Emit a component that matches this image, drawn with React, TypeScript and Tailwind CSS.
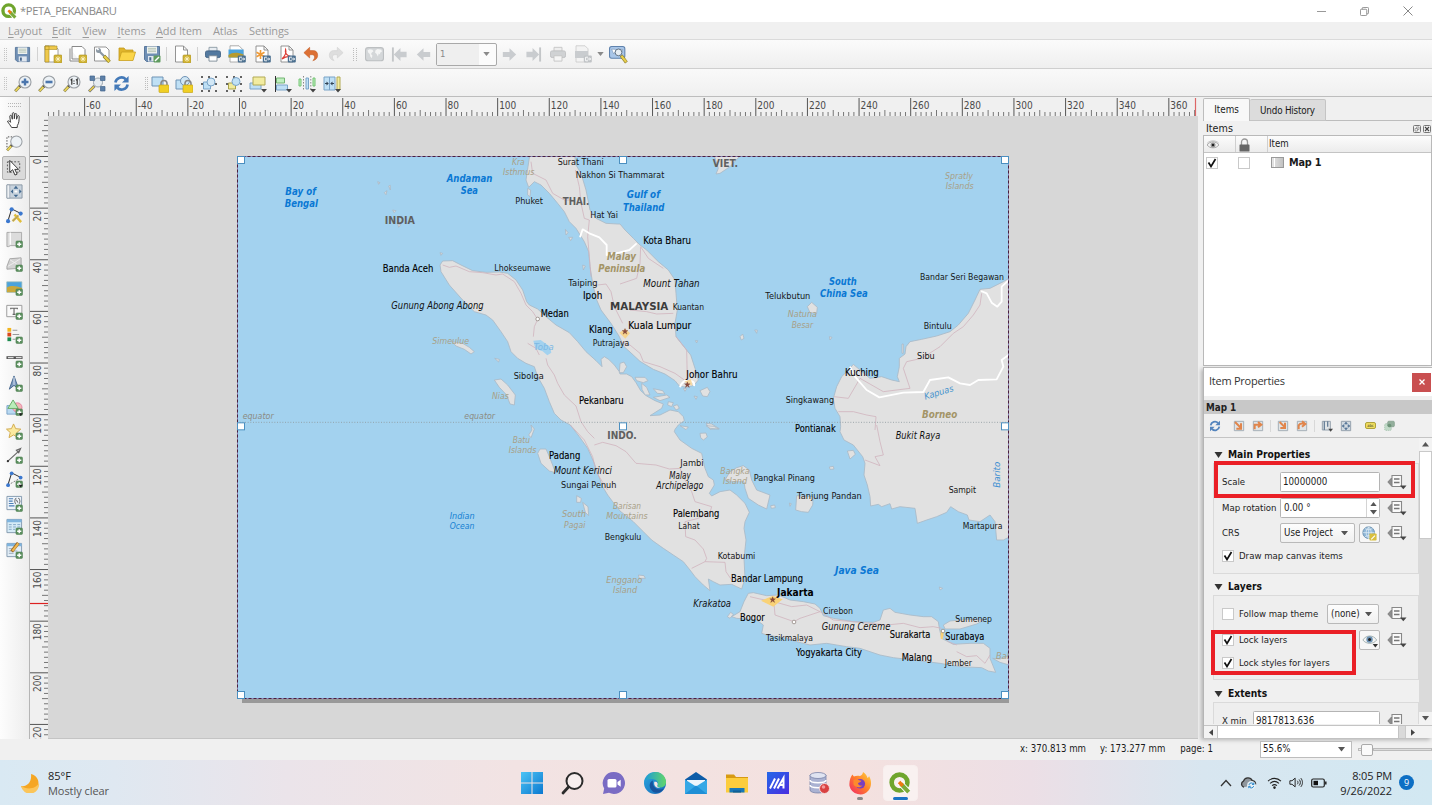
import React from "react";

type Kids = { children?: React.ReactNode };

/* ---------- small drawing helpers ---------- */

function Ic({ children, s = "size-[18px]", box = "0 0 18 18" }: Kids & { s?: string; box?: string }) {
  return (
    <svg viewBox={box} className={`${s} block shrink-0`} fill="none">
      {children}
    </svg>
  );
}

const Plus = () => (
  <g>
    <rect x="10.5" y="10.5" width="7" height="7" rx="1.2" fill="#5b8f5e" stroke="#47774b" strokeWidth=".5" />
    <path d="M14 11.8v4.4M11.8 14h4.4" stroke="#fff" strokeWidth="1.5" />
  </g>
);
const Gold = () => (
  <g>
    <rect x="10" y="10" width="8" height="8" rx="1" fill="#d2b536" stroke="#a98f22" strokeWidth=".6" />
    <path d="M14 11.3v5.4M11.3 14h5.4M12.2 12.2l3.6 3.6M15.8 12.2l-3.6 3.6" stroke="#fff8d0" strokeWidth=".8" />
  </g>
);
const Export = ({ c = "#4b6f8f" }: { c?: string }) => (
  <g>
    <rect x="9.8" y="10.5" width="8" height="7" rx="1" fill={c} />
    <path d="M14 12.2h-2.4v3.6H14M13.3 14h3M15.3 12.6l1.4 1.4-1.4 1.4" stroke="#fff" strokeWidth=".9" />
  </g>
);
const Floppy = () => (
  <g>
    <path d="M1.5 1.5h15v15h-13l-2-2z" fill="#6f8fb4" stroke="#5a789c" />
    <path d="M4 1.500h10v7H4z" fill="#eef2ef" />
    <path d="M5 3.400h8M5 5h8M5 6.600h8" stroke="#a5b7a5" strokeWidth=".7" />
    <path d="M5 11h8.500v5.500H5z" fill="#dfe6ee" />
    <path d="M6.300 12.200h2v3.400h-2z" fill="#49698f" />
  </g>
);
const Lens = ({ children }: Kids) => (
  <g>
    <path d="M6.500 10.500L1.200 16.300" stroke="#8b8350" strokeWidth="3" />
    <path d="M6 11.200L1.600 16" stroke="#ead558" strokeWidth="1.800" />
    <path d="M7.200 9.800l-1.800 2" stroke="#444" strokeWidth="2.600" />
    <circle cx="11" cy="7" r="6" fill="#edf2f6" stroke="#9a9fa4" strokeWidth="1.100" />
    {children}
  </g>
);
const Sheet = () => <path d="M3 1h8l4 4v12H3z M11 1v4h4" fill="#fff" stroke="#888" strokeWidth=".9" />;
const Down = () => <path d="M12 14h6l-3 3.6z" fill="#444" />;
const Lock = () => (
  <g>
    <path d="M10 10V8.500a3 3 0 016 0V10" stroke="#888" strokeWidth="1.600" />
    <rect x="8" y="10" width="10" height="7.500" rx=".8" fill="#f0cf24" stroke="#c4a51c" strokeWidth=".7" />
  </g>
);
const Dots = ({ c = "#333" }: { c?: string }) => (
  <path d="M1 2h2M8 2h2M15 2h2M1 16h2M8 16h2M15 16h2M1 9h2M15 9h2" stroke={c} strokeWidth="1.400" />
);
const Globe = () => (
  <g>
    <rect x=".5" y="2.500" width="17" height="12.500" rx="2.500" fill="#d4d7d9" stroke="#bcbfc1" />
    <path d="M2.500 5l2-1 2.500.5 1 1.500-1.500 1-.8 1.500L7 10l-.5 2.500L5 11l-.5-2.500L3 7zM10 5l2-1.200 3.500.7.500 2-1.500.5-.5 2-1-1-.8 3-1.200-2.500L9.500 7z" fill="#f4f5f5" />
  </g>
);
const Refresh = ({ s }: { s?: string }) => (
  <Ic s={s}>
    <path d="M2.500 8A6.500 6.500 0 0113.500 4.500M15.500 10A6.500 6.500 0 014.500 13.500" stroke="#4379b8" strokeWidth="2.700" />
    <path d="M16.500 1v7h-7zM1.500 17v-7h7z" fill="#4379b8" />
  </Ic>
);

/* ---------- toolbars ---------- */

const Cell = ({ children }: Kids) => <div className="flex w-[24.6px] shrink-0 items-center justify-center">{children}</div>;
const Sep = () => (
  <div className="flex w-[6px] shrink-0 justify-center">
    <div className="h-[14px] w-px bg-[#d2d2d2]" />
  </div>
);
const Grip = () => (
  <div className="mx-[5px] flex shrink-0 gap-[2px]">
    <div className="h-[13px] w-0 border-l border-dotted border-[#bdbdbd]" />
    <div className="h-[13px] w-0 border-l border-dotted border-[#bdbdbd]" />
  </div>
);

function MainBar() {
  return (
    <div className="flex h-[30px] shrink-0 items-center border-b border-[#cfcfcf] border-t border-t-[#dadada] bg-gradient-to-b from-[#fbfbfb] to-[#efefef]">
      <div className="w-[10.400px] shrink-0 pl-[4px]">
        <div className="h-[13px] w-[3px] border-x border-dotted border-[#c4c4c4]" />
      </div>
      <Cell><Ic s="size-[17px]"><Floppy /></Ic></Cell>
      <Sep />
      <Cell>
        <Ic>
          <path d="M1 1h10l3 3v13H1z" fill="#fff" stroke="#888" strokeWidth=".8" />
          <path d="M1 1h4v16H1zM1 1h12v3.500H1z" fill="#efc94c" stroke="#a98f22" strokeWidth=".6" />
          <Gold />
        </Ic>
      </Cell>
      <Cell>
        <Ic>
          <path d="M1 3.500V16h10M3 1.500h10l3 3V14H3z" fill="#fff" stroke="#888" />
          <Gold />
        </Ic>
      </Cell>
      <Cell>
        <Ic>
          <path d="M1.500 2H13l3 3v11H1.500z" fill="#fff" stroke="#888" strokeWidth=".9" />
          <path d="M5.500 5.500l6 6" stroke="#8b98a4" strokeWidth="2.200" />
          <circle cx="5.500" cy="5.500" r="2.500" fill="#8b98a4" />
          <path d="M4 3l1.500 2" stroke="#fff" strokeWidth="1.500" />
          <path d="M11 11l5.500 6" stroke="#8a7a20" strokeWidth="3.400" />
          <path d="M11.300 11.300l5 5.400" stroke="#e8cf4a" strokeWidth="2.200" />
        </Ic>
      </Cell>
      <Cell>
        <Ic>
          <path d="M1 15.500V3h5l1.500 2H15v2" fill="#e0b52c" stroke="#c39a1c" strokeWidth=".8" />
          <path d="M1 15.500L3.500 7H17.500L15 15.500z" fill="#fbd549" stroke="#c9a01e" strokeWidth=".8" />
        </Ic>
      </Cell>
      <Cell>
        <Ic>
          <Floppy />
          <rect x="10.500" y="10.500" width="7" height="7" rx="1" fill="#5f9b5f" />
          <path d="M12 16l4-4" stroke="#fff" strokeWidth="1.500" />
        </Ic>
      </Cell>
      <Sep />
      <Cell><Ic><path d="M2.500 1h8l4 4v12h-12z M10.500 1v4h4" fill="#fff" stroke="#888" strokeWidth=".9" /><Gold /></Ic></Cell>
      <Sep />
      <Cell>
        <Ic s="size-[16px]">
          <path d="M4.500 1.500h9V6h-9z" fill="#e8edf2" stroke="#8b98a4" />
          <rect x=".5" y="5.500" width="17" height="7.500" rx="2" fill="#53799f" stroke="#3d5f82" />
          <path d="M4.500 11h9v6h-9z" fill="#fff" stroke="#7b8894" />
        </Ic>
      </Cell>
      <Cell>
        <Ic>
          <path d="M2 .8h9l4 4V17H2z" fill="#fff" stroke="#999" strokeWidth=".8" />
          <path d="M.5 4.500h15v8H.5z" fill="#4ba3dd" />
          <path d="M.5 10c4-3 9-3 15-.5v3H.5z" fill="#b69b2e" />
          <Export />
        </Ic>
      </Cell>
      <Cell>
        <Ic>
          <Sheet />
          <path d="M7.500 5v9M3.500 7.200l8 4.600M11.500 7.200l-8 4.600" stroke="#ef9a36" strokeWidth="1.600" />
          <Export />
        </Ic>
      </Cell>
      <Cell>
        <Ic>
          <Sheet />
          <path d="M4 14c3-3 4.500-6.500 3.600-9.500C6.500 8 9 11 13 11.500 10 11 6.500 12 4 14z" stroke="#dd3b33" strokeWidth="1.200" />
          <Export />
        </Ic>
      </Cell>
      <Cell>
        <Ic s="size-[16px]"><path d="M1 7.500L7.500 1.500v3.700h4c3.200 0 5 2.100 5 5.200 0 3-2 5.600-5.500 6.100 1.500-1.200 2-2.500 2-4 0-1.700-.9-2.700-2.500-2.700h-3V13.500z" fill="#dd7034" stroke="#c05a24" strokeWidth=".6" /></Ic>
      </Cell>
      <Cell>
        <Ic s="size-[16px]"><path d="M17 7.500L10.500 1.500v3.700h-4c-3.200 0-5 2.100-5 5.200 0 3 2 5.600 5.500 6.100-1.500-1.200-2-2.500-2-4 0-1.700.9-2.700 2.500-2.700h3V13.500z" fill="#dedede" stroke="#cfcfcf" strokeWidth=".6" /></Ic>
      </Cell>
      <Grip />
      <Cell><Ic s="size-[19px]"><Globe /></Ic></Cell>
      <Cell><Ic s="size-[17px]"><path d="M2 1.500v15" stroke="#c3c6c8" strokeWidth="2" /><path d="M3 9l7-7v4h6.500v6H10v4z" fill="#c9cccf" /></Ic></Cell>
      <Cell><Ic s="size-[15px]"><path d="M1 9l8-7.500v4.500h8v6H9v4.500z" fill="#c9cccf" /></Ic></Cell>
      <div className="flex h-[23px] w-[61px] shrink-0 items-center rounded-[2px] border border-[#a9a9a9] bg-[#fbfbfb] text-[9.500px] text-[#8a8a8a]">
        <div className="flex h-full w-[42px] items-center bg-[#efefef] pl-[3px]">1</div>
        <svg viewBox="0 0 8 5" className="ml-[4px] h-[4px] w-[7px]"><path d="M0 0h8L4 5z" fill="#8a8a8a" /></svg>
      </div>
      <Cell><Ic s="size-[15px]"><path d="M17 9L9 1.500v4.500H1v6h8v4.500z" fill="#c9cccf" /></Ic></Cell>
      <Cell><Ic s="size-[17px]"><path d="M16 1.500v15" stroke="#c3c6c8" strokeWidth="2" /><path d="M15 9L8 2v4H1.500v6H8v4z" fill="#c9cccf" /></Ic></Cell>
      <Cell>
        <Ic s="size-[16px]">
          <path d="M4.500 1.500h9V6h-9z" fill="#eee" stroke="#c4c4c4" />
          <rect x=".5" y="5.500" width="17" height="7.500" rx="2" fill="#d0d2d4" stroke="#bdbfc1" />
          <path d="M4.500 11h9v6h-9z" fill="#f5f5f5" stroke="#c4c4c4" />
        </Ic>
      </Cell>
      <Cell>
        <Ic>
          <path d="M2 .8h9l3 3V17H2z" fill="#f3f3f3" stroke="#c9c9c9" strokeWidth=".8" />
          <path d="M1 6h13v7H1z" fill="#c9cccf" />
          <Export c="#c0c3c6" />
        </Ic>
      </Cell>
      <div className="flex w-[11px] justify-center"><svg viewBox="0 0 8 5" className="h-[4px] w-[7px]"><path d="M0 0h8L4 5z" fill="#8a8a8a" /></svg></div>
      <Cell>
        <Ic s="size-[19px]">
          <rect x=".5" y="1.500" width="14.500" height="11" rx="2" fill="#a9c6e8" stroke="#5f82ad" />
          <path d="M2.500 4h3l1 1.500-2 3zM9 4l4 .3-.5 2.500-2 1.500z" fill="#fff" stroke="#6a88aa" strokeWidth=".5" />
          <circle cx="9" cy="7" r="3.200" fill="#e6edf3" stroke="#5f7082" strokeWidth=".9" />
          <path d="M11.500 10l5 6.500" stroke="#8a7c30" strokeWidth="3.200" />
          <path d="M11.800 10.400l4.500 5.700" stroke="#e8cf4a" strokeWidth="2" />
        </Ic>
      </Cell>
    </div>
  );
}

function ViewBar() {
  return (
    <div className="flex h-[28px] shrink-0 items-center border-b border-[#bdbdbd] bg-gradient-to-b from-[#f9f9f9] to-[#f0f0f0] pt-[2px]">
      <div className="w-[10.600px] shrink-0 pl-[4px]">
        <div className="h-[13px] w-[3px] border-x border-dotted border-[#c4c4c4]" />
      </div>
      <Cell><Ic><Lens><path d="M11 3.500v7M7.500 7h7" stroke="#4b76ad" strokeWidth="2.400" /></Lens></Ic></Cell>
      <Cell><Ic><Lens><path d="M7.500 7h7" stroke="#4b76ad" strokeWidth="2.600" /></Lens></Ic></Cell>
      <Cell><Ic><Lens><path d="M7.600 5.200l1.200-1v5.600M13 5.200l1.200-1v5.600M11 5.500v1M11 8v1" stroke="#333" strokeWidth="1.200" /></Lens></Ic></Cell>
      <Cell>
        <Ic>
          <path d="M6.500 11L1 16.500" stroke="#777" strokeWidth="3" />
          <path d="M6 11.500L1.400 16" stroke="#e8cf4a" strokeWidth="1.700" />
          <circle cx="10" cy="7.500" r="4.500" fill="#e6ecf1" stroke="#9aa4ad" />
          <path d="M2 1h4.500v4.500H2zM12.500 1H17v4.500h-4.500zM12.500 11.500H17V16h-4.500z" fill="#5d80a8" stroke="#44658c" strokeWidth=".7" />
        </Ic>
      </Cell>
      <Cell><Refresh s="size-[17px]" /></Cell>
      <div className="flex w-[14px] shrink-0 justify-end"><div className="h-[13px] w-[3px] border-x border-dotted border-[#bdbdbd]" /></div>
      <Cell><Ic><path d="M1 2h11v9H1z" fill="#bfe0f5" stroke="#6f93b5" /><Lock /></Ic></Cell>
      <Cell><Ic><path d="M1 5h9v9H1z" fill="#bfe0f5" stroke="#6f93b5" /><circle cx="10" cy="6" r="4.500" fill="#cfe6f5" stroke="#6f93b5" /><Lock /></Ic></Cell>
      <Cell><Ic><Dots /><path d="M3.500 7h7v7h-7z" fill="#bfe0f5" stroke="#7aa4c8" /><circle cx="11" cy="7" r="4" fill="#d3e8f6" stroke="#7aa4c8" /></Ic></Cell>
      <Cell><Ic><Dots /><path d="M3.500 8h7v6h-7z" fill="#f0ea9a" stroke="#a9a24a" /><circle cx="11" cy="6.500" r="4" fill="#bfe0f5" stroke="#7aa4c8" /></Ic></Cell>
      <Cell><Ic><path d="M1 8h11v6H1z" fill="#bfe0f5" stroke="#7aa4c8" /><path d="M4 2h12v8H4z" fill="#f2eca0" stroke="#b2aa55" /><Down /></Ic></Cell>
      <Cell><Ic><path d="M1.500 1v16" stroke="#333" /><path d="M2.500 3h8v5h-8z" fill="#bff0bf" stroke="#74b474" /><path d="M2.500 10h11v5h-11z" fill="#bfe0f5" stroke="#7aa4c8" /><Down /></Ic></Cell>
      <Cell><Ic><path d="M1 4h2v7H1z" fill="#bff0bf" stroke="#74c474" /><path d="M8 3h2.500v11H8z" fill="#bfe0f5" stroke="#7aa4c8" /><path d="M15 3h2v8h-2z" fill="#bff0bf" stroke="#74c474" /><path d="M5.500 1v14M12.800 1v14" stroke="#888" strokeDasharray="1.500 1.500" /><Down /></Ic></Cell>
      <Cell><Ic><path d="M1 2h11v13H1z" fill="#bfe0f5" stroke="#7aa4c8" /><path d="M14 2h3v13h-3z" fill="#f2eca0" stroke="#b2aa55" /><path d="M6.500 2v13" stroke="#7aa4c8" /><path d="M2 8.500h2M9 8.500h2" stroke="#345" strokeWidth="1.200" /><path d="M3.500 6.500L5.800 8.500l-2.300 2zM9.500 6.500L7.200 8.500l2.300 2z" fill="#345" /><Down /></Ic></Cell>
    </div>
  );
}

const sideTools: React.ReactNode[] = [
  <path d="M6 17.500c-1-2.500-3.500-4.500-4.500-6.500.8-1 2-.6 3.300 1L4 5.500c.3-1.300 1.700-1.300 2 0l.7 3.200V2.800c.2-1.400 1.900-1.400 2.100 0v5.400l.6-4.700c.3-1.200 1.900-1.100 2 .2l-.2 5 1-3.200c.5-1.100 1.900-.7 1.800.5-.3 3.500 0 6.500-2 9.500l-.1 2z" fill="#fff" stroke="#333" strokeWidth="1" />,
  <g><path d="M1 13V2h8" stroke="#444" strokeDasharray="1.500 1.500" /><Lens /></g>,
  <g><path d="M1.500 3h13v11h-13z" stroke="#555" strokeDasharray="2 1.600" /><path d="M4 1.500v12.500l3-2.700L9.500 17l2.300-1-2.500-5h4z" fill="#fff" stroke="#333" /></g>,
  <g><path d="M1 2h16v14H1z" fill="#c8d3dd" stroke="#8a98a5" /><path d="M1 2h3v14H1z" fill="#eef1f4" stroke="#8a98a5" strokeWidth=".7" /><path d="M10.500 3L13 6H8zM10.500 15L8 12.500h5zM5 9l2.500-2.500v5zM16.500 9L14 6.500v5z" fill="#41688f" /><path d="M9 9h3" stroke="#fff" strokeWidth="2" /></g>,
  <g><path d="M2 15L6 2l10 5" stroke="#333" strokeWidth="1.100" /><path d="M7 15l6-6M9 8l7 8" stroke="#e0bd3a" strokeWidth="2.600" /><path d="M7 15l6-6" stroke="#8d8d8d" strokeWidth="1" /><circle cx="2.200" cy="15" r="2.200" fill="#3b78cf" /><circle cx="6" cy="2.500" r="2.200" fill="#3b78cf" /><circle cx="15.500" cy="7" r="2.200" fill="#3b78cf" /></g>,
  <g><path d="M1 1.500h15.500v14H4.500L3 16.500H1z" fill="#dcdcdc" stroke="#a9a9a9" /><path d="M4.500 1.500v13" stroke="#fff" strokeWidth="1.400" /><Plus /></g>,
  <g><path d="M1 12l3-8 12-1v11L1 15z" fill="#d3d3d3" stroke="#a4a4a4" /><path d="M4 5l5 3 6-4M2 12l7-4 6 4" stroke="#f4f4f4" strokeWidth=".8" /><Plus /></g>,
  <g><path d="M.8 3h16v11H.8z" fill="#4ba3dd" stroke="#9bb" strokeWidth=".8" /><path d="M1 9c5-3 10-1.500 16 .5V14H1z" fill="#c9a83c" /><Plus /></g>,
  <g><path d="M.8 2.500h16v12H.8z" fill="#fafafa" stroke="#999" /><path d="M5 5.500h7M8.500 5.500v6.500M7 12h3M5 5v1.500M12 5v1.500" stroke="#666" strokeWidth="1.200" /><Plus /></g>,
  <g><path d="M1.500 1h4v4h-4z" fill="#f2b51f" /><path d="M1.500 6h4v4h-4z" fill="#d9481c" /><path d="M1.500 11h4v4h-4z" fill="#1c8a4e" /><path d="M7 3.500h5M7 8h7M7 13h3" stroke="#999" strokeWidth="1.200" /><Plus /></g>,
  <g><path d="M.5 7h17" stroke="#555" strokeWidth="3" /><path d="M2 7h6M10.500 7h6" stroke="#ddd" strokeWidth="1.200" /><Plus /></g>,
  <g><path d="M8.500 1L3.500 15l5-4 5 4z" fill="#7f9bc0" stroke="#44658c" /><path d="M8.500 2v8.500" stroke="#dfe8f2" /><Plus /></g>,
  <g><path d="M1 7h10v9H1z" fill="#b9d9f2" stroke="#7aa4c8" /><circle cx="12" cy="9" r="5" fill="#f2b8b8" stroke="#d58" strokeWidth=".6" /><path d="M7.500 1L13 10H2z" fill="#b9edb9" stroke="#6a6" /><Plus /><path d="M13 15h5l-2.500 3z" fill="#222" /></g>,
  <g><path d="M8 1l2.200 5 5.500.5-4.200 3.600 1.300 5.400L8 12.600 3.200 15.500l1.300-5.400L.5 6.500 5.800 6z" fill="#fbeaa0" stroke="#d0a94a" /><Plus /></g>,
  <g><path d="M2 15L15 3M15.500 1.500l-4.500 2 2.500 2.500z" stroke="#666" strokeWidth="1.200" fill="#ddd" /><circle cx="2" cy="15" r="1.200" fill="#333" /><Plus /></g>,
  <g><path d="M2 15L6 2l10 5" stroke="#333" strokeWidth="1.100" /><path d="M2 15L16 7" stroke="#777" strokeDasharray="2 1.500" /><circle cx="2.200" cy="15" r="2" fill="#3b78cf" /><circle cx="6" cy="2.500" r="2" fill="#3b78cf" /><circle cx="15.500" cy="7" r="2" fill="#3b78cf" /><Plus /><path d="M13 14.500h5l-2.500 3z" fill="#222" /></g>,
  <g><path d="M1 1.500h15.500v14H1z" fill="#eef4fa" stroke="#8499ae" /><path d="M3 4h4.500M3 6.500h4M3 9h5M3 11.500h6" stroke="#4c7fb5" strokeWidth="1.200" /><path d="M11 3.500c-2 0-1 2.500-2 3 1 .5 0 2.500 1.500 3M13 3.500c2 0 1 2.500 2 3-1 .5 0 2.500-1.500 3M11 5l1.500 3" stroke="#555" strokeWidth="1" /><Plus /></g>,
  <g><path d="M1 1.500h15.500v14H1z" fill="#d6ebf7" stroke="#8499ae" /><path d="M1 1.500h15.500v3H1z" fill="#7fb4de" /><path d="M3 7h3M7.500 7h3M12 7h3M3 9.500h3M7.500 9.500h3M12 9.500h3M3 12h3M7.500 12h2" stroke="#7fa6c6" /><Plus /></g>,
  <g><path d="M1 1.500h15.500v14H1z" fill="#e3eef7" stroke="#8499ae" /><path d="M1 1.500h15.500v3H1z" fill="#7fb4de" /><path d="M3 7h4M3 9.500h9M3 12h5" stroke="#9ab" /><path d="M13 1L6 10" stroke="#9a6a28" strokeWidth="3.600" /><path d="M13 1.500L6.800 9.500" stroke="#efb750" strokeWidth="2.200" /><Plus /></g>,
];

function SideBar() {
  return (
    <div className="flex w-[29.500px] shrink-0 flex-col items-center border-r border-[#b5b5b5] bg-gradient-to-r from-[#fdfdfd] to-[#ededed] pt-[6px]">
      <div className="mb-px h-[4px] w-[13px] shrink-0 border-y border-dotted border-[#b5b5b5]" />
      {sideTools.map((t, i) => (
        <div
          key={i}
          className={
            i === 2
              ? "flex h-[24px] w-[24px] shrink-0 items-center justify-center rounded-[2px] border border-[#b2b2b2] bg-[#dadada]"
              : "flex h-[23.94px] w-[24px] shrink-0 items-center justify-center"
          }
        >
          <Ic s="size-[17px]">{t}</Ic>
        </div>
      ))}
    </div>
  );
}

/* ---------- rulers: 2.5815 px per millimetre ---------- */

const MM = 2.5815;
const range = (a: number, b: number, step: number) => Array.from({ length: Math.floor((b - a) / step) + 1 }, (_, i) => a + i * step);
const tickLen = (v: number) => (v % 20 === 0 ? 18 : v % 10 === 0 ? 6 : 4);

function HRuler() {
  return (
    <svg viewBox="30 98 1168 18" className="block h-[18px] w-[1168px] shrink-0 bg-[#f0f0f0]">
      {range(-74, 370, 2).map((v) => {
        const x = 239.5 + v * MM;
        return <path key={v} d={`M${x} 116v-${tickLen(v)}`} stroke={v % 20 === 0 ? "#555" : "#777"} strokeWidth="1" />;
      })}
      {range(-60, 360, 20).map((v) => (
        <text key={v} x={241 + v * MM} y="109" fontSize="10" fill="#4a4a4a">{v}</text>
      ))}
      <path d="M1195.500 98v18" stroke="#d66" strokeWidth="1.200" />
    </svg>
  );
}

function VRuler() {
  return (
    <svg viewBox="30 116 18 623" className="block h-[623px] w-[18px] shrink-0 bg-[#f0f0f0]">
      {range(-14, 224, 2).map((v) => {
        const y = 156.5 + v * MM;
        return <path key={v} d={`M48 ${y}h-${tickLen(v)}`} stroke={v % 20 === 0 ? "#555" : "#777"} strokeWidth="1" />;
      })}
      {range(0, 220, 20).map((v) => (
        <text key={v} fontSize="10" fill="#4a4a4a" textAnchor="end" transform={`translate(40.500 ${158.5 + v * MM}) rotate(-90)`}>{v}</text>
      ))}
      <path d="M30 603.500h18" stroke="#d22" strokeWidth="1.200" />
    </svg>
  );
}

/* ---------- map: outlines are digitised on four sheets at 3 units per pixel ---------- */

type Part = [[number, number], string];
const NW: [number, number] = [0, 0];
const NE: [number, number] = [1152, 0];
const SW: [number, number] = [0, 825];
const SE: [number, number] = [1152, 825];

function pts(...parts: Part[]) {
  return parts
    .map(([[ox, oy], s]) =>
      s.trim().split(/\s+/).map((p) => {
        const [x, y] = p.split(",").map(Number);
        return `${x + ox},${y + oy}`;
      }).join(" ")
    )
    .join(" ");
}

const land: string[] = [
  pts(
    [NW, "612,345 620,333 650,332 675,345 710,362 750,367 790,366 815,370 840,390 860,420 872,455 880,465 905,477 930,500 960,525 1000,548 1025,575 1050,605 1080,632 1098,650 1095,628 1105,620 1118,628 1135,645 1150,665"],
    [NE, "0,672 20,672 35,680 48,698 62,722 80,738 105,752 130,762 125,775 90,797 120,795 150,780 175,785 190,800 193,812 175,825 165,838"],
    [SE, "163,20 180,45 215,70 245,85 255,130 265,155 280,165 283,180 268,205 275,213 300,200 330,195 350,210 375,235 388,262 375,290 372,310 378,345 372,400 375,460 365,492 350,485 335,478 300,480 280,470 265,462 270,497 250,480 225,455 210,435 190,410 160,390 130,370 95,345 70,320 40,290 0,258"],
    [SW, "1130,230 1115,210 1100,185 1085,145 1075,115 1055,70 1030,35 1003,0"],
    [NW, "975,810 955,790 940,755 925,715 905,680 895,650 870,640 845,625 825,605 815,575 795,545 770,510 750,495 715,485 680,450 640,405 615,365"]
  ),
  pts(
    [NW, "882,10 876,50 870,90 878,112 895,95 915,105 940,130 965,160 985,185 1000,215 1020,235 1045,275 1058,305 1062,350 1070,400 1080,445 1095,480 1125,520 1150,560"],
    [NE, "12,590 30,606 60,634 100,658 135,672 165,692 178,708 200,712 222,706 235,690 225,655 212,615 190,588 168,560 165,520 172,480 168,430 165,390 145,360 115,335 80,300 60,285 40,265 15,240 0,222"],
    [NW, "1145,222 1110,220 1080,205 1062,180 1050,120 1035,70 1020,45 1015,10"]
  ),
  pts(
    [NE, "1175,380 1150,395 1110,415 1080,418 1065,450 1045,490 1015,525 990,545 950,558 905,568 870,575 858,590 855,612 838,625 838,650 832,680 838,695 815,690 785,680 750,685 720,660 700,643 685,660 665,680 650,710 640,745 645,775 660,800 662,830"],
    [SE, "660,20 672,45 700,60 728,95 735,115 732,150 742,180 750,215 752,243 775,238 785,245 810,236 815,252 840,245 885,250 892,295 920,285 950,275 980,262 992,245 1015,260 1042,270 1047,285 1080,290 1110,270 1125,290 1130,345 1150,345 1180,330"]
  ),
  pts([SE, "385,505 400,503 440,512 475,510 510,525 550,530 585,537 600,550 610,572 640,580 700,590 760,592 780,585 790,555 810,550 825,562 870,570 910,575 935,575 955,590 958,610 965,640 1000,658 1050,655 1090,655 1110,670 1110,700 1127,742 1105,738 1085,728 1020,725 960,715 880,705 820,698 780,690 720,670 680,665 620,655 570,660 530,650 500,640 440,630 425,625 430,600 410,585 375,582 350,580 335,575 360,560 372,530"]),
  pts([SE, "970,600 990,588 1040,583 1092,585 1070,597 1020,612 975,612"]),
  pts([SE, "1118,700 1140,702 1175,690 1175,722 1140,712"]),
  pts([SE, "330,140 350,128 370,122 388,135 395,165 410,195 450,210 440,252 415,240 385,220 375,190 372,170 340,170 315,165"]),
  pts([SE, "530,212 580,215 578,240 565,262 545,260 527,255"]),
  pts([NW, "775,690 795,687 815,705 838,735 835,765 822,762 812,735 790,712"]),
  pts([SW, "905,85 912,72 930,72 938,90 950,120 958,143 940,138 915,115"]),
  pts([SW, "1022,212 1036,220 1034,232 1022,232"]),
  pts([SW, "1040,232 1056,245 1058,272 1048,262"]),
  pts([SW, "885,0 895,12 885,38 878,30 888,15"]),
  pts([NW, "648,575 680,580 700,592 715,605 705,612 685,598 660,588"]),
  pts([NW, "875,115 884,120 882,140 875,135"]),
  pts([NW, "988,238 996,248 990,255"]),
  pts([NW, "998,262 1010,262 1004,272"]),
  pts([NW, "1040,345 1048,348 1042,360"]),
  pts([NE, "283,18 360,18 330,50 300,70 288,72 295,55"]),
  pts([NE, "562,470 575,457 592,472 590,490 570,488"]),
  pts([NE, "0,640 12,636 20,650 10,668 -2,668"]),
  pts([NE, "45,682 75,682 84,692 70,698 50,692"]),
  pts([NE, "65,700 80,712 90,735 75,735 66,718"]),
  pts([NE, "100,716 128,722 135,732 112,730"]),
  pts([NE, "100,742 140,735 150,742 120,752"]),
  pts([NE, "240,722 262,712 270,725 262,740 248,738"]),
  pts([NE, "222,738 232,740 228,748"]),
  pts([NE, "190,715 200,716 195,724"]),
  pts([NE, "145,755 160,758 155,770 143,765"]),
  pts([NE, "160,768 172,764 178,775 168,780"]),
  pts([NE, "258,820 275,822 298,836 270,838"]),
  pts([SE, "240,25 258,24 262,36 250,45 242,38"]),
  pts([SE, "180,2 205,6 198,14"]),
  pts([SE, "258,2 282,4 296,12 270,10"]),
  pts([SE, "682,78 700,76 706,88 690,102"]),
  pts([SE, "628,126 640,124 642,132 630,133"]),
  pts([SE, "452,242 464,240 466,248 454,250"]),
  pts([SE, "508,234 514,236 510,244"]),
  pts([SE, "958,486 968,490 960,495"]),
  pts([SE, "55,450 72,452 76,460 58,460"]),
  pts([SE, "322,575 332,562 340,568 330,580"]),
  pts([NE, "846,582 850,582 850,610 846,610"]),
  pts([NE, "360,560 368,552 372,565 364,570"]),
  pts([NE, "404,540 412,540 410,550"]),
  pts([NE, "628,560 636,562 630,570"]),
  pts([NE, "226,572 233,572 230,579"]),
  pts([NW, "445,128 453,122 450,134"]),
  pts([NW, "458,108 463,106 463,120"]),
  pts([NW, "425,95 432,98 428,103"]),
  pts([NW, "470,180 480,182 474,188"]),
  pts([NW, "485,222 494,224 488,232"]),
  pts([NW, "612,308 620,310 615,316"]),
  pts([NW, "776,625 790,628 788,636"]),
  pts([NW, "395,18 403,18 398,24"]),
];

const roads: string[] = [
  pts([NW, "620,345 640,352 660,348 700,365 740,368 780,375 800,372 835,395 855,430 870,465 890,485 905,508 895,530 892,560"]),
  pts([NW, "875,580 900,595 910,615"]),
  pts([NW, "930,625 935,645 955,675 965,700 985,735 1020,768 1035,815 1055,845 1075,865"]),
  pts([SW, "1075,60 1100,52 1140,62 1170,80 1200,115 1260,120 1300,132 1335,130"]),
  pts([SE, "180,130 195,165 215,200 225,230 275,245 270,262 235,280 195,290 197,335 225,345 250,372 260,400 255,410 215,430"]),
  pts([SE, "255,410 315,412 318,440 335,465"]),
  pts([SW, "1003,0 1045,45 1070,95 1080,140 1115,195"]),
  pts([NW, "885,35 890,70 930,90 950,130 985,150 1010,150"]),
  pts([NW, "1018,60 1030,110 1035,160 1045,205 1060,210 1055,260 1060,320 1065,380"]),
  pts([NW, "1085,405 1110,402 1125,425 1135,470 1160,520"]),
  pts([NE, "62,290 60,340 50,385 0,402"]),
  pts([NE, "0,575 30,585 60,610 70,635 120,650 165,670 200,695"]),
  pts([NE, "62,290 85,325 130,355"]),
  pts([NE, "160,490 110,492 80,485 30,480"]),
  pts([NE, "168,560 200,600 202,690"]),
  pts([NE, "1085,430 1080,465 1060,495 1030,530 1000,550 960,590 905,625 860,635 850,655 870,715 790,725 720,685 685,745 642,740"]),
  pts([NE, "655,785 700,785 740,795 768,800 765,840"]),
  pts([SE, "770,0 780,50 790,90 765,95 780,122 735,105"]),
  pts([SE, "390,515 420,522 462,530 515,545 560,540 600,560 540,580 522,590 465,570 462,535"]),
  pts([SE, "600,560 640,585 720,592 800,600 850,595 900,608 940,605 965,610"]),
  pts([SE, "965,625 985,650 1010,660"]),
  pts([SE, "1010,680 1040,695 1070,692 1095,715 1110,690"]),
];

const borders: string[] = [
  pts([NW, "1032,262 1040,238 1060,250 1090,262 1112,285 1112,315 1150,308 1180,300 1202,280"]),
  pts([NE, "690,650 705,680 740,720 778,742 850,728 910,726 930,690 985,682 1020,700 1050,705 1075,690 1130,688 1150,650 1145,630 1170,612"]),
  pts([NE, "1083,423 1100,430 1115,458 1132,470 1145,455 1145,410 1165,392"]),
];

/* text, left, baseline, drawn width, kind (all in sheet units) */
type Kind = "c" | "m" | "p" | "s" | "w" | "r" | "n" | "k" | "b" | "j" | "e";
const kinds: Record<Kind, { size: number; fill: string; cls: string }> = {
  c: { size: 28, fill: "#161616", cls: "" },
  m: { size: 30, fill: "#000", cls: "" },
  p: { size: 29, fill: "#111", cls: "italic" },
  s: { size: 30, fill: "#0a78d4", cls: "font-bold italic" },
  w: { size: 27, fill: "#1580d2", cls: "italic" },
  r: { size: 27, fill: "#a8a087", cls: "italic" },
  n: { size: 30, fill: "#5f5f5f", cls: "font-bold" },
  k: { size: 31, fill: "#3c3c3c", cls: "font-bold" },
  b: { size: 29, fill: "#a39467", cls: "font-bold italic" },
  j: { size: 30, fill: "#000", cls: "font-bold" },
  e: { size: 27, fill: "#8b8b83", cls: "italic" },
};
const labels: [string, number, number, number, Kind][] = [
  ["Bay of", 148, 135, 92, "s"],
  ["Bengal", 146, 171, 100, "s"],
  ["Andaman", 632, 97, 137, "s"],
  ["Sea", 674, 133, 52, "s"],
  ["Gulf of", 1172, 145, 100, "s"],
  ["Thailand", 1161, 182, 124, "s"],
  ["South", 1779, 405, 83, "s"],
  ["China Sea", 1752, 441, 143, "s"],
  ["Java Sea", 1797, 1271, 132, "s"],
  ["Indian", 641, 1106, 75, "w"],
  ["Ocean", 641, 1137, 74, "w"],
  ["INDIA", 446, 221, 91, "n"],
  ["THAI.", 980, 165, 80, "n"],
  ["VIET.", 1430, 52, 76, "n"],
  ["INDO.", 1114, 866, 88, "n"],
  ["MALAYSIA", 1122, 480, 175, "k"],
  ["Surat Thani", 965, 46, 138, "c"],
  ["Nakhon Si Thammarat", 1019, 84, 266, "c"],
  ["Phuket", 838, 161, 83, "c"],
  ["Hat Yai", 1063, 205, 83, "c"],
  ["Kota Bharu", 1222, 282, 143, "m"],
  ["Banda Aceh", 440, 366, 152, "m"],
  ["Lhokseumawe", 775, 362, 169, "c"],
  ["Taiping", 997, 407, 88, "c"],
  ["Ipoh", 1041, 447, 58, "m"],
  ["Kuantan", 1310, 480, 94, "c"],
  ["Klang", 1059, 549, 72, "m"],
  ["Kuala Lumpur", 1177, 538, 189, "m"],
  ["Putrajaya", 1070, 589, 110, "c"],
  ["Medan", 914, 501, 84, "m"],
  ["Sibolga", 833, 687, 90, "c"],
  ["Pekanbaru", 1029, 762, 134, "m"],
  ["Johor Bahru", 1351, 683, 154, "m"],
  ["Telukbutun", 1588, 446, 135, "c"],
  ["Bandar Seri Begawan", 2052, 389, 252, "c"],
  ["Bintulu", 2063, 537, 84, "c"],
  ["Sibu", 2043, 628, 53, "c"],
  ["Kuching", 1827, 679, 101, "m"],
  ["Singkawang", 1649, 760, 145, "c"],
  ["Pontianak", 1677, 847, 122, "m"],
  ["Padang", 939, 927, 94, "m"],
  ["Sungai Penuh", 975, 1015, 166, "c"],
  ["Jambi", 1333, 947, 70, "c"],
  ["Pangkal Pinang", 1553, 993, 184, "c"],
  ["Tanjung Pandan", 1683, 1048, 194, "c"],
  ["Palembang", 1311, 1102, 139, "m"],
  ["Lahat", 1327, 1138, 64, "c"],
  ["Bengkulu", 1106, 1169, 110, "c"],
  ["Kotabumi", 1445, 1227, 113, "c"],
  ["Bandar Lampung", 1485, 1295, 216, "m"],
  ["Jakarta", 1623, 1338, 110, "j"],
  ["Cirebon", 1761, 1392, 90, "c"],
  ["Bogor", 1512, 1412, 74, "m"],
  ["Tasikmalaya", 1590, 1474, 141, "c"],
  ["Yogyakarta City", 1680, 1518, 198, "m"],
  ["Surakarta", 1961, 1465, 122, "m"],
  ["Surabaya", 2128, 1470, 117, "m"],
  ["Sumenep", 2158, 1415, 110, "c"],
  ["Malang", 1997, 1534, 91, "m"],
  ["Jember", 2126, 1548, 82, "c"],
  ["Sampit", 2138, 1029, 82, "c"],
  ["Martapura", 2180, 1136, 119, "c"],
  ["Gunung Abong Abong", 466, 478, 277, "p"],
  ["Mount Tahan", 1222, 411, 169, "p"],
  ["Mount Kerinci", 953, 973, 175, "p"],
  ["Malay", 1300, 987, 64, "p"],
  ["Archipelago", 1261, 1018, 141, "p"],
  ["Krakatoa", 1372, 1371, 113, "p"],
  ["Gunung Cereme", 1757, 1440, 206, "p"],
  ["Bukit Raya", 1979, 868, 134, "p"],
  ["Malay", 1113, 329, 87, "b"],
  ["Peninsula", 1087, 365, 141, "b"],
  ["Borneo", 2058, 803, 106, "b"],
  ["Kra", 828, 44, 38, "r"],
  ["Isthmus", 801, 75, 94, "r"],
  ["Simeulue", 589, 582, 110, "r"],
  ["Nias", 768, 746, 50, "r"],
  ["Batu", 830, 879, 52, "r"],
  ["Islands", 818, 910, 83, "r"],
  ["South", 978, 1101, 72, "r"],
  ["Pagai", 984, 1133, 64, "r"],
  ["Barisan", 1131, 1077, 84, "r"],
  ["Mountains", 1111, 1108, 124, "r"],
  ["Enggano", 1111, 1298, 108, "r"],
  ["Island", 1131, 1329, 72, "r"],
  ["Bangka", 1453, 971, 88, "r"],
  ["Island", 1461, 1002, 72, "r"],
  ["Natuna", 1655, 502, 88, "r"],
  ["Besar", 1667, 533, 64, "r"],
  ["Spratly", 2127, 87, 84, "r"],
  ["Islands", 2129, 118, 84, "r"],
  ["Bali", 2280, 1526, 46, "r"],
  ["equator", 20, 808, 93, "e"],
  ["equator", 685, 808, 92, "e"],
];

function MapItem() {
  return (
    <svg viewBox="3 18 2316 1629" className="block h-[543px] w-[772px] bg-[#a3d2ef] font-['DejaVu_Sans','DejaVu_Sans_Condensed',sans-serif]">
      {land.map((p, i) => (
        <polygon key={i} points={p} fill="#e1e1e1" stroke="#a9b9c6" strokeWidth="2.500" strokeLinejoin="round" />
      ))}
      <path d="M892 572l22-2 28 20 4 18-12 8-14-12-22-8z" fill="#a3d2ef" />
      {roads.map((p, i) => (
        <polyline key={i} points={p} fill="none" stroke="#d0b4be" strokeWidth="2.400" strokeLinejoin="round" />
      ))}
      {borders.map((p, i) => (
        <polyline key={i} points={p} fill="none" stroke="#fff" strokeWidth="5.500" strokeLinejoin="round" />
      ))}
      <path d="M3 817H2319" stroke="#8f9aa0" strokeWidth="2.500" strokeDasharray="3 5" />
      <path d="M1332 712c4-14 12-20 22-22M1364 692c8 2 12 8 10 16" stroke="#fff" strokeWidth="6" fill="none" />
      <path d="M1150 548l18-12 14 14-14 16z" fill="#f7d48e" />
      <path d="M1575 1352l35-14 30 10-28 22z" fill="#f9d277" />
      <path d="M1345 695l20-8 4 20z" fill="#f7d9a0" />
      <path d="M2114 1440l10 6-4 22-6-2z" fill="#f9d277" />
      {[[1167, 544], [1354, 704], [1610, 1349]].map(([x, y]) => (
        <path key={x} transform={`translate(${x} ${y}) scale(.85)`} d="M0-10L3-3h7L4 2l3 8-7-5-7 5 3-8-6-5h7z" fill="#8b4a3c" stroke="#6b3a32" />
      ))}
      {[[905, 507], [1674, 1416], [2121, 1443]].map(([x, y]) => (
        <circle key={x} cx={x} cy={y} r="5.500" fill="#fff" stroke="#8a7f78" strokeWidth="2.200" />
      ))}
      <text x="893" y="599" fontSize="27" className="italic" fill="#7db9e4" textLength="60" lengthAdjust="spacingAndGlyphs">Toba</text>
      {labels.map(([t, x, y, w, k], i) => (
        <text key={i} x={x} y={y} textLength={w} lengthAdjust="spacingAndGlyphs" fontSize={kinds[k].size} fill={kinds[k].fill} className={kinds[k].cls}
          stroke={k === "m" ? "#000" : "none"} strokeWidth=".35">
          {t}
        </text>
      ))}
      <text transform="translate(2068 749) rotate(-17)" fontSize="27" className="italic" fill="#4794cd" textLength="90" lengthAdjust="spacingAndGlyphs">Kapuas</text>
      <text transform="translate(2292 1013) rotate(-90)" fontSize="27" className="italic" fill="#3b8fd2" textLength="78" lengthAdjust="spacingAndGlyphs">Barito</text>
      <rect x="4.500" y="19.500" width="2313" height="1626" fill="none" stroke="#8a8ac0" strokeWidth="3" />
      <rect x="4.500" y="19.500" width="2313" height="1626" fill="none" stroke="#4a1f3a" strokeWidth="3" strokeDasharray="9 6" />
      {[3, 1149, 2295].map((x) =>
        [18, 817, 1623].map((y) => (
          <rect key={`${x}-${y}`} x={x + 1.5} y={y + 1.5} width="21" height="21" fill="#fff" stroke="#4b8fc0" strokeWidth="3" />
        ))
      )}
    </svg>
  );
}

/* ---------- dock ---------- */

const Tri = ({ c = "#555", d = "M0 0h8L4 5z" }: { c?: string; d?: string }) => (
  <svg viewBox="0 0 8 5" className="block h-[4.500px] w-[7px] shrink-0"><path d={d} fill={c} /></svg>
);
const Check = ({ on }: { on?: boolean }) => (
  <div className="size-[12px] shrink-0 border border-[#c9c9c9] bg-white">
    {on && <svg viewBox="0 0 10 10" className="block size-[10px]" fill="none"><path d="M1.500 4.500l2.500 4L8.500 1" stroke="#111" strokeWidth="1.700" /></svg>}
  </div>
);
const Eye = ({ s, c = "#7d95ab" }: { s: string; c?: string }) => (
  <svg viewBox="0 0 16 12" className={`${s} block`} fill="none">
    <path d="M1 6c3-5 11-5 14 0-3 4.500-11 4.500-14 0z" fill="#f4f4f4" stroke="#999" />
    <circle cx="8" cy="6" r="3" fill={c} /><circle cx="8" cy="6" r="1.500" fill="#222" />
    <path d="M1 4c3-4 11-4 14 0" stroke="#aaa" strokeWidth=".8" />
  </svg>
);
const Override = () => (
  <svg viewBox="0 0 20 16" className="block h-[16px] w-[20px] shrink-0" fill="none">
    <path d="M4.500 4v8L.8 8z" fill="#8d8d8d" stroke="#777" strokeWidth=".8" />
    <path d="M5 1.500h9.500v11H5z" fill="#fafafa" stroke="#888" strokeWidth="1.100" />
    <path d="M7 5h5.500M7 8.500h5.500" stroke="#777" strokeWidth="1.300" />
    <path d="M13 11.500h6.500l-3.200 3.800z" fill="#444" />
  </svg>
);
const Head = ({ children }: Kids) => (
  <div className="flex h-[17px] items-center pl-[10px] text-[10.200px] font-bold text-[#111]">
    <svg viewBox="0 0 8 6" className="mr-[5px] h-[6px] w-[9px]"><path d="M0 0h8L4 6z" fill="#333" /></svg>
    {children}
  </div>
);
const Field = ({ children, w }: Kids & { w: string }) => (
  <div className={`${w} flex h-[20px] shrink-0 items-center rounded-[1.500px] border border-[#b4b4b4] bg-white pl-[2px] text-[9.700px]`}>{children}</div>
);
const Combo = ({ children, w }: Kids & { w: string }) => (
  <div className={`${w} flex h-[20px] shrink-0 items-center justify-between rounded-[2px] border border-[#b9b9b9] bg-gradient-to-b from-[#fdfdfd] to-[#f0f0f0] pl-[3px] pr-[6px] text-[9.700px]`}>{children}</div>
);

const MiniShape = ({ c, a }: { c: string; a: string }) => (
  <Ic s="size-[12px]">
    <path d="M2 2h14v14H2z" fill="#dfe3e6" stroke="#9aa5ae" strokeWidth="1.400" />
    <path d={a} stroke={c} strokeWidth="3" />
  </Ic>
);

function Dock() {
  return (
    <div className="flex w-[229px] shrink-0 flex-col">
      <div className="flex h-[24px] shrink-0 items-end text-[9.800px]">
        <div className="flex h-[23px] w-[47px] items-center justify-center rounded-t-[2px] border border-b-0 border-[#bdbdbd] bg-[#f8f8f8]">Items</div>
        <div className="flex h-[22px] w-[76px] items-center justify-center rounded-t-[2px] border border-l-0 border-[#c4c4c4] bg-[#dcdcdc]"><span className="whitespace-nowrap pt-[3px] tracking-[-0.2px]">Undo History</span></div>
        <div className="flex-1 border-b border-[#bdbdbd]" />
      </div>
      <div className="flex h-[14px] shrink-0 items-center justify-between pl-[3px] pt-[2px] text-[10.700px] text-[#222]">
        Items
        <div className="flex gap-[2px] pr-px">
          <svg viewBox="0 0 8 8" className="size-[8px]" fill="none"><rect x=".5" y=".5" width="7" height="7" rx="1" stroke="#777" /><path d="M2 3.500h2.500V6H2zM3.500 3.500V2H6v2.500H4.500" stroke="#777" strokeWidth=".6" /></svg>
          <svg viewBox="0 0 8 8" className="size-[8px]" fill="none"><rect x=".5" y=".5" width="7" height="7" rx="1" stroke="#777" /><path d="M2 2l4 4M6 2L2 6" stroke="#444" strokeWidth="1.100" /></svg>
        </div>
      </div>
      <div className="flex h-[231px] shrink-0 flex-col border border-[#b9b9b9] bg-white">
        <div className="flex h-[17px] shrink-0 items-center border-b border-[#c4c4c4] bg-gradient-to-b from-[#fcfcfc] to-[#ececec] text-[9.600px]">
          <div className="flex h-full w-[32px] items-center border-r border-[#cfcfcf] pl-[2px] pt-px"><Eye s="h-[10px] w-[14px]" c="#999" /></div>
          <div className="flex h-full w-[32px] items-center border-r border-[#cfcfcf] pl-[2px] pt-[2px]">
            <svg viewBox="0 0 12 14" className="h-[14px] w-[13px]" fill="none"><path d="M3 7V4a3 3 0 016 0v3" stroke="#999" strokeWidth="1.300" /><rect x="1" y="6.500" width="10" height="7" rx=".6" fill="#666" /></svg>
          </div>
          <span className="pl-px">Item</span>
        </div>
        <div className="flex h-[19px] items-center">
          <div className="w-[32px] pl-[2px]"><Check on /></div>
          <div className="w-[32px] pl-[2px]"><Check /></div>
          <div className="ml-[3px] flex h-[11px] w-[13px] border border-[#999] bg-gradient-to-r from-[#e4e4e4] to-[#c2c2c2]"><div className="ml-[2px] h-full w-px bg-white" /></div>
          <span className="ml-[5px] pt-[2px] text-[10.800px] font-bold tracking-[-0.2px]">Map 1</span>
        </div>
      </div>
      <Properties />
    </div>
  );
}

function Properties() {
  return (
    <div className="mt-px flex h-[371px] shrink-0 flex-col border-l border-[#b5b5b5] bg-[#f0f0f0] shadow-[-2px_2px_4px_rgba(0,0,0,0.25)]">
      <div className="flex h-[29px] shrink-0 items-center justify-between border-t border-[#b9b9b9] bg-white pl-[5px] font-['Open_Sans','Noto_Sans',sans-serif] text-[11px] text-[#333]">
        <span className="pb-px tracking-[-0.25px]">Item Properties</span>
        <div className="mr-px flex h-[19px] w-[19px] items-center justify-center bg-[#c94f50]">
          <svg viewBox="0 0 6 6" className="size-[6px]" fill="none"><path d="M.5.5l5 5M5.500.5l-5 5" stroke="#fff" strokeWidth="1.300" /></svg>
        </div>
      </div>
      <div className="mt-[4px] flex h-[14px] shrink-0 items-center bg-[#c8c8c8] pl-[2px] pt-[2px] text-[9.800px] font-bold text-[#222]">Map 1</div>
      <div className="flex h-[23px] shrink-0 items-center pl-[5px] opacity-90">
        <Refresh s="size-[12px]" />
        <div className="ml-[12px]"><MiniShape c="#e07a3a" a="M3 3l9 9M12 5v8H5" /></div>
        <div className="ml-[7px]"><MiniShape c="#e07a3a" a="M4 14V7h9M9 3l5 4-5 4" /></div>
        <div className="mx-[6px] h-[12px] w-px bg-[#d6d6d6]" />
        <MiniShape c="#e07a3a" a="M4 3l8 8M12 4v8H5" />
        <div className="ml-[7px]"><MiniShape c="#e07a3a" a="M4 14V8c2-3 6-3 9-2M9 2l5 4-5 4" /></div>
        <div className="mx-[6px] h-[12px] w-px bg-[#d6d6d6]" />
        <Ic s="size-[12px]"><path d="M2 2h12v13H2z" fill="#dfe3e6" stroke="#8795a2" strokeWidth="1.400" /><path d="M5 2v13M10 2v8" stroke="#5b7690" strokeWidth="2" /><path d="M11 13h7l-3.500 4.500z" fill="#333" /></Ic>
        <div className="ml-[7px]"><Ic s="size-[12px]"><path d="M2 2h14v14H2z" fill="#cfd8e0" stroke="#8795a2" strokeWidth="1.400" /><path d="M9 3l2 3H7zM9 15l2-3H7zM3 9l3-2v4zM15 9l-3-2v4z" fill="#46698f" stroke="#46698f" /></Ic></div>
        <div className="ml-[13px] flex h-[7px] w-[11px] items-center justify-center rounded-[2px] border border-[#a99a28] bg-[#efdc50]"><span className="text-[4px] leading-none">abc</span></div>
        <div className="ml-[8px]"><Ic s="size-[11px]"><rect x="1" y="6" width="11" height="11" rx="2" fill="#bcd8c4" stroke="#8fb39a" strokeDasharray="2 1.500" /><rect x="6" y="2" width="11" height="9" rx="2" fill="#8aa893" stroke="#6d8f78" /><circle cx="9" cy="9" r="3" fill="#5f8a6c" /></Ic></div>
      </div>
      <div className="flex min-h-0 flex-1 border-t border-[#c4c4c4]">
        <div className="relative h-[286px] w-[215px] shrink-0 overflow-hidden text-[9.550px] text-[#1c1c1c]">
          <div className="pt-[8px]"><Head>Main Properties</Head></div>
          <div className="ml-[9px] h-[111px] border border-[#dadada] bg-[#eeeeee] pl-[8px] pt-[7px]">
            <div className="flex h-[22px] items-center"><span className="w-[58px] pt-px">Scale</span><Field w="w-[100px]">10000000</Field><div className="ml-[6.500px]"><Override /></div></div>
            <div className="mt-[4px] flex h-[22px] items-center">
              <span className="w-[58px] whitespace-nowrap">Map rotation</span>
              <Field w="w-[100px]">
                <span className="flex-1 pl-px">0.00 °</span>
                <div className="flex h-full w-[13px] flex-col items-center justify-center gap-[4px] border-l border-[#d4d4d4]"><Tri d="M0 5h8L4 0z" /><Tri /></div>
              </Field>
              <div className="ml-[6.500px]"><Override /></div>
            </div>
            <div className="mt-[3px] flex h-[22px] items-center">
              <span className="w-[58px]">CRS</span>
              <Combo w="w-[75px]"><span className="whitespace-nowrap">Use Project</span><Tri /></Combo>
              <div className="ml-[4px] flex h-[20px] w-[21px] items-center justify-center rounded-[2px] border border-[#b9b9b9] bg-[#f7f7f7]">
                <Ic s="size-[15px]"><circle cx="8" cy="8" r="7" fill="#8fb7d8" stroke="#6389a8" /><path d="M1 8h14M8 1v14M3.500 3c3 2 6 2 9 0M3.500 13c3-2 6-2 9 0M8 1c-4 4-4 10 0 14M8 1c4 4 4 10 0 14" stroke="#e8f1f7" strokeWidth=".8" /><rect x="9" y="9" width="8.500" height="8.500" rx="1" fill="#d9bf3e" /><path d="M11 16l4.500-4.500" stroke="#fff" strokeWidth="1.300" /></Ic>
              </div>
              <div className="ml-[6.500px]"><Override /></div>
            </div>
            <div className="mt-[2px] flex h-[20px] items-center gap-[5px]"><Check on />Draw map canvas items</div>
          </div>
          <div className="pt-[4px]"><Head>Layers</Head></div>
          <div className="ml-[9px] h-[85px] border border-[#dadada] bg-[#eeeeee] pl-[8px] pt-[7px]">
            <div className="flex h-[22px] items-center"><Check /><span className="ml-[5px] w-[88px] whitespace-nowrap">Follow map theme</span><Combo w="w-[52px]"><span>(none)</span><Tri /></Combo><div className="ml-[7.500px]"><Override /></div></div>
            <div className="mt-[4px] flex h-[22px] items-center">
              <Check on /><span className="ml-[5px] w-[120px]">Lock layers</span>
              <div className="flex h-[20px] w-[21px] items-center justify-center rounded-[2px] border border-[#b9b9b9] bg-[#f7f7f7]">
                <Ic s="size-[16px]"><path d="M1 9c3.500-6 12-6 15.500 0-3.500 5-12 5-15.500 0z" fill="#f4f4f4" stroke="#9aa" /><circle cx="8.500" cy="8.500" r="3.600" fill="#6f94b5" /><circle cx="8.500" cy="8.500" r="1.700" fill="#222" /><path d="M12 13.500h6l-3 3.800z" fill="#333" /></Ic>
              </div>
              <div className="ml-[6.500px]"><Override /></div>
            </div>
            <div className="mt-[2px] flex h-[20px] items-center gap-[5px]"><Check on />Lock styles for layers</div>
          </div>
          <div className="pt-[5px]"><Head>Extents</Head></div>
          <div className="ml-[9px] h-[60px] border border-[#dadada] bg-[#eeeeee] pl-[8px] pt-[8px]">
            <div className="flex h-[20px] items-center"><span className="w-[31px]">X min</span><Field w="w-[127px]">9817813.636</Field><div className="ml-[6.500px]"><Override /></div></div>
          </div>
          <div className="absolute left-[10px] top-[23px] h-[37px] w-[201px] border-4 border-[#ea1f26]" />
          <div className="absolute left-[7px] top-[192px] h-[45px] w-[145px] border-4 border-[#ea1f26]" />
        </div>
        <div className="flex w-[13px] shrink-0 flex-col bg-[#dadada]">
          <div className="flex h-[13px] items-center justify-center bg-[#f3f3f3]"><Tri d="M0 5h8L4 0z" /></div>
          <div className="h-[88px] border border-[#c9c9c9] bg-white" />
          <div className="flex-1" />
          <div className="flex h-[13px] items-center justify-center bg-[#f3f3f3]"><Tri /></div>
        </div>
      </div>
      <div className="flex h-[13px] shrink-0 border-t border-[#c4c4c4] bg-[#f3f3f3]">
        <div className="flex w-[13px] items-center justify-center"><svg viewBox="0 0 5 8" className="h-[7px] w-[4px]"><path d="M5 0v8L0 4z" fill="#444" /></svg></div>
        <div className="w-[182px] border-x border-[#c4c4c4] bg-white" />
        <div className="w-[7px] border-r border-[#c9c9c9] bg-[#d9d9d9]" />
        <div className="flex w-[13px] items-center justify-center"><svg viewBox="0 0 5 8" className="h-[7px] w-[4px]"><path d="M0 0v8l5-4z" fill="#444" /></svg></div>
      </div>
    </div>
  );
}

/* ---------- task bar ---------- */

const QLogo = ({ s }: { s: string }) => (
  <svg viewBox="0 0 24 24" className={`${s} block shrink-0`} fill="none">
    <circle cx="11.500" cy="11.500" r="8.600" stroke="#6fa52d" strokeWidth="5" />
    <path d="M12 12l9.500 10" stroke="#fff" strokeWidth="6.500" />
    <path d="M13 13l8.500 9" stroke="#7bab3a" strokeWidth="4.600" />
    <path d="M11 11l4 4" stroke="#ee7913" strokeWidth="3.800" />
  </svg>
);

const taskIcons: React.ReactNode[] = [
  <g fill="url(#win)"><path d="M1 1h10.500v10.500H1zM12.500 1H23v10.500H12.500zM1 12.500h10.500V23H1zM12.500 12.500H23V23H12.500z" /></g>,
  <g fill="none" stroke="#2b2b2b"><circle cx="13.500" cy="10" r="8" strokeWidth="2" fill="#f7eeee" /><path d="M7.500 16L2 22" strokeWidth="2.800" strokeLinecap="round" /></g>,
  <g><path d="M12 1a11 11 0 11-5 20.800L1 23l1.200-5.500A11 11 0 0112 1z" fill="#7a6cc4" /><rect x="5.500" y="8" width="9" height="8.500" rx="1.500" fill="#fff" /><path d="M15.500 11l3.200-2.200v6.900L15.500 13.500z" fill="#fff" /></g>,
  <g>
    <circle cx="12" cy="12" r="11" fill="url(#edge)" />
    <path d="M1.200 11C2.500 4.500 8 1 13 1c6 .5 10 5 10 10 0 4-3 5.500-6 5.500-2 0-3.200-.8-2.800-1.600 1.300-1.500 1-3.800-.8-5.300C10.500 7.300 4 7.500 1.200 11z" fill="url(#edge2)" />
    <path d="M10 9.500c-4.500 1.500-4.500 8 .5 11.500 4 2 9-.5 10.500-3.500-2 1.200-5.500 1.300-7.500.2-2.800-1.600-4.300-5-3.500-8.200z" fill="#16539d" />
    <path d="M11.300 10.800c2.500-.8 4.300 1.500 3 3.800-.5 1 .8 2 3 1.900-2.500 1.200-7-.5-6-5.700z" fill="#f4e6e6" />
  </g>,
  <g><path d="M1 8.500L12 1l11 7.500v4H1z" fill="#0d5ca8" /><path d="M3 9h18v7H3z" fill="#eef6fc" /><path d="M1 8.500l11 7 11-7V23H1z" fill="#35a8e6" /><path d="M1 23l11-8.500L23 23z" fill="#1f8fd6" /></g>,
  <g><path d="M1 3.500h8l2 2.500h12v5H1z" fill="#d79a14" /><path d="M1 7h22v14.500H1z" fill="#fccd3d" /><path d="M4.500 17h15v4.500h-15z" fill="#1878b8" /><path d="M8 19.500h8v2H8z" fill="#0f5f98" /></g>,
  <g><path d="M1 1h22v22H1z" fill="url(#asus)" /><path d="M4 17.500l5-10M8 17.500l5-10" stroke="#fff" strokeWidth="2" /><path d="M11.500 17.500L17.500 7v10.500M14 14h4" stroke="#fff" strokeWidth="2" fill="none" /></g>,
  <g><path d="M3 4v15c0 4 16 4 16 0V4z" fill="#aab2d2" stroke="#7a83a8" strokeWidth=".8" /><ellipse cx="11" cy="4.500" rx="8" ry="3" fill="#dfe3f1" stroke="#7a83a8" strokeWidth=".8" /><path d="M3 9c0 3.500 16 3.500 16 0M3 14c0 3.500 16 3.500 16 0" stroke="#fff" fill="none" strokeWidth="1.500" /><circle cx="17.500" cy="17.500" r="5" fill="#d94141" stroke="#f3dada" /><circle cx="16.500" cy="16" r="1.800" fill="#f29a9a" /></g>,
  <g>
    <path d="M12 5c2-1 3-2.500 3-4 3 2 4 4 4.500 6 1-.5 1.300-1 1.500-2 3 5 2.500 11-.5 14.500A11 11 0 011.500 15C1 10 2.500 6 4.500 3.500c.5 1 1 1.500 1.500 2C8 4.500 10 4.500 12 5z" fill="url(#fox)" />
    <circle cx="12.300" cy="12.800" r="4.800" fill="#7a3fc0" />
    <path d="M5.500 9c3-2 5 0 8 .8-1 1.700-2.500 1.700-3.500 2.200 0 2 2 3 4.500 2.500-2 2.500-7 2.500-9-1z" fill="#fd8a2c" />
  </g>,
];

function TaskBar() {
  return (
    <div className="flex h-[45px] shrink-0 items-center bg-[linear-gradient(90deg,#d9e9f3_0%,#dfe8f1_8%,#ebe4ea_20%,#f2e3e3_36%,#f4e1df_60%,#ecdfe6_72%,#d8e6f0_84%,#d2e8f2_100%)] font-['Open_Sans','Noto_Sans',sans-serif]">
      <svg className="h-0 w-0">
        <defs>
          <linearGradient id="win" x1="0" y1="0" x2="1" y2="1"><stop offset="0" stopColor="#4cc4f5" /><stop offset="1" stopColor="#0a78d0" /></linearGradient>
          <linearGradient id="edge" x1="0" y1="0" x2="1" y2="1"><stop offset="0" stopColor="#2aa7e0" /><stop offset="1" stopColor="#1668b8" /></linearGradient>
          <linearGradient id="edge2" x1="0" y1="0" x2="1" y2="0"><stop offset="0" stopColor="#1d9ad8" /><stop offset="1" stopColor="#62d66a" /></linearGradient>
          <linearGradient id="asus" x1="0" y1="0" x2="1" y2="1"><stop offset="0" stopColor="#2467e8" /><stop offset="1" stopColor="#4a2ee0" /></linearGradient>
          <linearGradient id="fox" x1="1" y1="0" x2="0" y2="1"><stop offset="0" stopColor="#ffd93b" /><stop offset=".5" stopColor="#ff7a2c" /><stop offset="1" stopColor="#f0246a" /></linearGradient>
        </defs>
      </svg>
      <div className="flex w-[511px] shrink-0 items-center">
        <svg viewBox="0 0 20 20" className="ml-[20px] size-[20px]"><path d="M11 1a9 9 0 11-10 12c6 1 11-4 10-12z" fill="#f5a623" /><path d="M1 13a9 9 0 0018-3c-3 6-12 7-18 3z" fill="#fbc55a" /></svg>
        <div className="ml-[8px] text-[11px] leading-[15px]">
          <div className="text-[#222]">85°F</div>
          <div className="tracking-[-0.05px] text-[#555]">Mostly clear</div>
        </div>
      </div>
      {taskIcons.map((t, i) => (
        <div key={i} className="relative flex w-[41.100px] shrink-0 justify-center">
          <svg viewBox="0 0 24 24" className="size-[24px]">{t}</svg>
          {i === 8 && <div className="absolute -bottom-[5px] h-[3px] w-[6px] rounded-full bg-[#888]" />}
        </div>
      ))}
      <div className="ml-[2px] flex h-[36px] w-[35px] shrink-0 flex-col items-center rounded-[4px] border border-[#f8efee] bg-[#f9f1f0] pt-[6px]">
        <QLogo s="size-[22px]" />
        <div className="mt-[3px] h-[3px] w-[15px] rounded-full bg-[#1a74c4]" />
      </div>
      <div className="ml-auto flex items-center text-[#222]">
        <svg viewBox="0 0 12 8" className="h-[8px] w-[12px]" fill="none"><path d="M1 7l5-5.500L11 7" stroke="#333" strokeWidth="1.300" /></svg>
        <svg viewBox="0 0 18 14" className="ml-[8px] h-[14px] w-[17px]" fill="none"><path d="M4 11.500a3.500 3.500 0 01-.3-6.500A5 5 0 0113 4.500a3.600 3.600 0 013.500 4" stroke="#333" strokeWidth="1.400" fill="#8f969c" /><circle cx="12" cy="9.500" r="4.500" fill="#e6f0f6" /><path d="M9.500 9a2.700 2.700 0 015-.7M14.500 10.300a2.700 2.700 0 01-5 .5M14.700 6.500v2h-2M9.300 12.500v-2h2" stroke="#1d7fc8" /></svg>
        <svg viewBox="0 0 16 13" className="ml-[10px] h-[12px] w-[15px]" fill="none" stroke="#222" strokeWidth="1.200"><path d="M1 4.500c4-4 10-4 14 0M3.200 7c3-2.800 6.600-2.800 9.600 0M5.400 9.400c1.700-1.500 3.500-1.500 5.200 0" /><circle cx="8" cy="11.500" r=".8" fill="#222" /></svg>
        <svg viewBox="0 0 16 12" className="ml-[7px] h-[11px] w-[14px]" fill="none" stroke="#222" strokeWidth="1.100"><path d="M1 4h2.500L7 1v10L3.500 8H1zM9.500 4c1 1.200 1 2.800 0 4M11.500 2.500c2 2 2 5 0 7M13.500 1c2.500 3 2.500 7 0 10" /></svg>
        <svg viewBox="0 0 16 10" className="ml-[8px] h-[10px] w-[16px]" fill="none"><rect x=".7" y="1" width="12.600" height="8" rx="1.500" stroke="#222" strokeWidth="1.200" /><path d="M2.500 2.800h4.500v4.400H2.500z" fill="#111" /><path d="M14.800 3.500v3" stroke="#222" strokeWidth="1.500" /></svg>
        <div className="ml-[12px] w-[53px] whitespace-nowrap text-right text-[11px] leading-[15px]">
          <div className="tracking-[-0.2px]">8:05 PM</div>
          <div className="-tracking-[0.050px]">9/26/2022</div>
        </div>
        <div className="ml-[7px] mr-[18px] flex size-[15px] items-center justify-center rounded-full bg-[#0d6fc4] text-[9px] leading-none text-white">9</div>
      </div>
    </div>
  );
}

/* ---------- window ---------- */

const menus: [string, string, string][] = [
  ["L", "ayout", "w-[44px]"],
  ["E", "dit", "w-[30.500px]"],
  ["V", "iew", "w-[35px]"],
  ["I", "tems", "w-[38.500px]"],
  ["A", "dd Item", "w-[57px]"],
  ["", "Atlas", "w-[36px]"],
  ["", "Settings", "w-[50px]"],
];

export default function App() {
  return (
    <div className="flex h-[805px] w-[1432px] flex-col overflow-hidden bg-[#f0f0f0] font-['DejaVu_Sans_Condensed','DejaVu_Sans',sans-serif] text-[#1a1a1a]">
      <div className="flex h-[22px] shrink-0 items-center bg-white font-['Open_Sans','Noto_Sans',sans-serif]">
        <div className="ml-px"><QLogo s="size-[16px]" /></div>
        <span className="ml-[3px] text-[11.200px] tracking-[-0.35px] text-[#8a8a8a]">*PETA_PEKANBARU</span>
        <div className="ml-auto flex items-center gap-[34px] pr-[19px]">
          <div className="h-px w-[9px] bg-[#999]" />
          <svg viewBox="0 0 10 10" className="size-[9px]" fill="none" stroke="#888"><rect x=".5" y="2.500" width="7" height="7" rx="1" /><path d="M2.500 2.500V1.500a1 1 0 011-1h5a1 1 0 011 1v5a1 1 0 01-1 1H7.500" /></svg>
          <svg viewBox="0 0 10 10" className="size-[10px]" fill="none"><path d="M.5.5l9 9M9.500.5l-9 9" stroke="#888" /></svg>
        </div>
      </div>
      <div className="flex h-[17px] shrink-0 items-center pl-[8px] pt-[2px] font-['Open_Sans','Noto_Sans',sans-serif] text-[11px] tracking-[-0.1px] text-[#9a9a9a]">
        {menus.map(([u, rest, w]) => (
          <div key={rest} className={`${w} shrink-0 whitespace-nowrap`}><span className="underline underline-offset-2">{u}</span>{rest}</div>
        ))}
      </div>
      <MainBar />
      <ViewBar />
      <div className="flex h-[642px] shrink-0">
        <SideBar />
        <div className="flex w-[1168px] shrink-0 flex-col">
          <div className="h-px shrink-0 bg-[#f0f0f0]" />
          <HRuler />
          <div className="flex h-[623px]">
            <VRuler />
            <div className="relative flex-1 overflow-hidden border-b border-[#c4c4c4] bg-[#d7d7d7]">
              <div className="absolute left-[189px] top-[40px]">
                <MapItem />
                <div className="ml-[5px] h-[4px] bg-[#999]" />
              </div>
            </div>
          </div>
        </div>
        <div className="w-[5.500px] shrink-0" />
        <Dock />
      </div>
      <div className="flex h-[21px] shrink-0 items-center justify-end text-[9.600px]">
        <span className="mr-[14px]">x: 370.813 mm</span>
        <span className="mr-[15px]">y: 173.277 mm</span>
        <span className="mr-[47px]">page: 1</span>
        <div className="flex h-[17px] w-[92px] items-center justify-between border border-[#bdbdbd] bg-white pl-[2px] pr-[6px]">55.6%<Tri /></div>
        <div className="ml-[6px] flex w-[74px] items-center">
          <div className="h-[3px] w-[3px] border-y border-l border-[#bbb]" />
          <div className="h-[12px] w-[12px] rounded-[2px] border border-[#aaa] bg-[#fafafa]" />
          <div className="h-[3px] flex-1 border border-[#bbb] bg-[#ddd]" />
        </div>
      </div>
      <TaskBar />
    </div>
  );
}
